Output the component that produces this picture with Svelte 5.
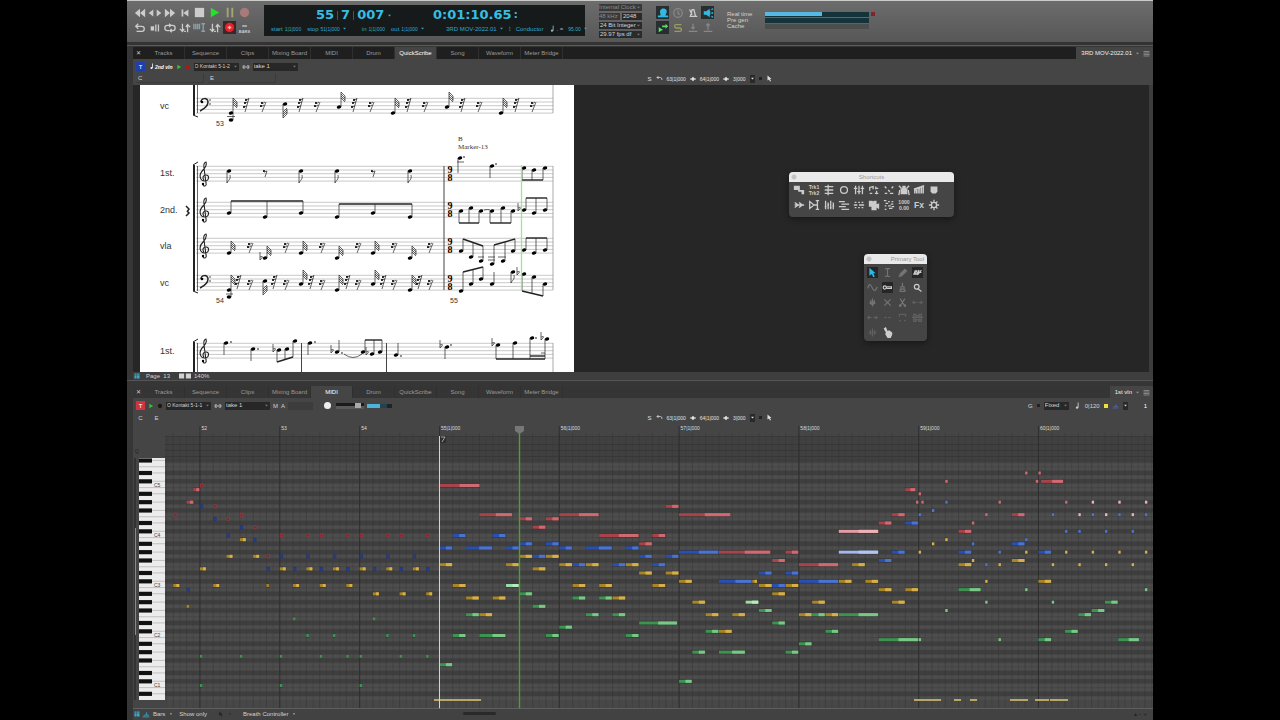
<script lang="ts">
	type Tone = 'red' | 'blue' | 'gold' | 'green' | 'pink' | 'sky' | 'mint';
	type Glyph = { s?: string; f?: string; t?: string[] };
	type Stem = [number, number, number];

	const tabs = ['Tracks', 'Sequence', 'Clips', 'Mixing Board', 'MIDI', 'Drum', 'QuickScribe', 'Song', 'Waveform', 'Meter Bridge'];

	// s = stroked path, f = filled path, t = lines of text, all on a 14 x 14 box
	const glyphs: Record<string, Glyph> = {
		rewind: { f: 'M7 2V12L1 7ZM13 2V12L7 7Z' },
		back: { f: 'M11 1V13L3 7Z' },
		forward: { f: 'M3 1V13L11 7Z' },
		fast: { f: 'M1 2V12L7 7ZM7 2V12L13 7Z' },
		start: { f: 'M3 3H5V11H3ZM11 3V11L5 7Z' },
		stop: { f: 'M2 2H12V12H2Z' },
		play: { f: 'M3 2V12L12 7Z' },
		pause: { f: 'M4 2H6V12H4ZM9 2H11V12H9Z' },
		record: { f: 'M7 2A5 5 0 1 1 7 12A5 5 0 1 1 7 2Z' },
		loopback: { s: 'M5 2L2 5L5 8M2 5H9A2.4 2.4 0 0 1 9 11H3' },
		stopbars: { s: 'M8 3V11M11 3V11', f: 'M2 5H6V10H2Z' },
		cycle: { s: 'M6 10H4A3 3 0 0 1 4 4H8M6 2L8 4L6 6M8 4H10A3 3 0 0 1 10 10H7M9 8L7 10L9 12' },
		punch: { s: 'M4 2V11M1 8L4 11L6 8M10 12V3M8 6L10 3L13 6M6 11H8' },
		count: { s: 'M1 3V9M3 3V9M5 3V9M7 3V9M9 3H13M11 3V11M9 11H13' },
		overdub: { s: 'M7 5V9M5 7H9', f: 'M7 2A5 5 0 1 1 7 12A5 5 0 1 1 7 2Z' },
		head: { f: 'M4 10V8C2 2 7 1 9 2C13 3 11 8 10 9V10H13V12H1V10Z' },
		clock: { s: 'M7 2A5 5 0 1 1 7 12A5 5 0 1 1 7 2M7 4V7L9 9' },
		metro: { s: 'M4 11L6 3H8L10 11ZM6 9L3 3M3 11H12' },
		speaker: { s: 'M9 5V9M11 3L13 2M11 7H13M11 11L13 12', f: 'M2 5H5L9 2V12L5 9H2Z' },
		sendplay: { f: 'M2 6V12L7 9ZM6 4H10V2L13 5L10 8V6H6Z' },
		solo: { s: 'M11 3H5Q3 3 3 5T5 7H9Q11 7 11 9T9 11H3' },
		down: { s: 'M7 2V8M5 6L7 8L9 6M2 11H12' },
		up: { s: 'M7 9V2M5 4L7 2L9 4M2 11H12' },
		clips: { f: 'M1 2H8V7H1ZM6 7H13V12H10V9H6Z' },
		trk: { t: ['Trk1', 'Trk2'] },
		list: { s: 'M2 3H12M2 7H12M2 11H12M6 1V13' },
		ring: { s: 'M7 3A4 4 0 1 1 7 11A4 4 0 1 1 7 3' },
		faders: { s: 'M3 2V12M7 2V12M11 2V12M1 5H5M5 9H9M9 5H13' },
		score: { s: 'M2 8V4L6 3V6M9 5H12M9 3V6M2 11H5M8 11H12M10 8V12' },
		dots: { s: 'M2 3L4 5M6 7L8 9M12 3L10 5M2 11H5M8 11H12' },
		drum: { s: 'M1 2L4 5M13 2L10 5M2 7L1 13M12 7L13 13', f: 'M5 2H9V5H11V12H3V5H5Z' },
		stairs: { s: 'M2 11V7H4V11M6 11V5H8V11M10 11V3H12V11M1 6L13 2' },
		badge: { f: 'M3 3H11V9L9 11H5L3 9Z' },
		skip: { s: 'M2 4L6 7L2 10M7 4L11 7L7 10M2 7H13' },
		mirror: { s: 'M2 3V11L7 7ZM9 2H13M9 12H13M11 2V12M6 7H11' },
		sliders: { s: 'M3 2V12M6 4V12M9 2V12M12 4V12M2 9H4M5 7H7M8 10H10M11 8H13' },
		bars: { s: 'M1 3H8M4 6H13M1 9H9M4 12H13' },
		matrix: { s: 'M2 4H4M6 4H8M10 4H12M1 7H5M7 7H13M2 10H4M6 10H8M10 10H12' },
		camera: { f: 'M1 2H5L6 3L7 2H10V6L13 5V12L10 10V13H4V9H1Z' },
		grid: { s: 'M1 2H4M6 3H8M10 3H12M3 5H6M9 6H12M2 8H4M6 8H9M10 9H13M7 11H11M2 12H4' },
		numbers: { t: ['1000', '0.00'] },
		fx: { t: ['Fx'] },
		gear: { s: 'M7 1V4M7 10V13M1 7H4M10 7H13M3 3L5 5M9 9L11 11M11 3L9 5M5 9L3 11M7 4A3 3 0 1 1 7 10A3 3 0 1 1 7 4' },
		arrow: { f: 'M3 1V11L6 9L8 13L10 12L8 8H11Z' },
		ibeam: { s: 'M4 2H6L7 3L8 2H10M7 3V11M4 12H6L7 11L8 12H10' },
		pencil: { s: 'M3 12L4 9L10 3L12 5L6 11ZM5 10L11 4' },
		wave: { s: 'M2 10L4 5H6L4 9H6L9 4L7 10L12 4M8 7H12' },
		sine: { s: 'M1 8C3 0 5 4 7 8S11 12 13 6' },
		key: { s: 'M3.500 5A2 2 0 1 1 3.500 9A2 2 0 1 1 3.500 5M6 6H12V8H6' },
		brush: { s: 'M7 1V6M5 6H9V9H5ZM4 9V12H10V9' },
		lens: { s: 'M6 3A3 3 0 1 1 6 9A3 3 0 1 1 6 3M8 9L12 12' },
		drop: { s: 'M7 2V12M5 4L4 8L7 10L10 8L9 4', f: 'M5 6H9V9H5Z' },
		cross: { s: 'M3 3L11 11M11 3L3 11' },
		scissors: { s: 'M4 2L9 10M10 2L5 10M4 10A1 1 0 1 1 4 12A1 1 0 1 1 4 10M10 10A1 1 0 1 1 10 12A1 1 0 1 1 10 10' },
		stretch: { s: 'M1 7H6M3 5L1 7L3 9M8 7H13M11 5L13 7L11 9' },
		dash: { s: 'M3 7H6M8 7H11M4 6V8M10 6V8' },
		frame: { s: 'M3 3H11M3 3V6M11 3V6M3 11H5M9 11H11' },
		mesh: { s: 'M2 3H5V6H2ZM9 3H12V6H9ZM5 5H9M2 9H5V12H2ZM9 9H12V12H9ZM5 10H9M0 7H14' },
		split: { s: 'M7 2V12M2 7H5M9 7H12M4 4L5 7L4 10M10 4L9 7L10 10' },
		hand: { f: 'M2 2L5 0L7 5L9 4L13 7V10L11 14H7L4 9L5 7Z' },
		link: { s: 'M5 5H2V9H5M9 5H12V9H9M4 7H10' },
		undo: { s: 'M5 2L2 5L5 8M2 5H9Q12 5 12 10' },
		diamond: { f: 'M7 2L12 7L7 12L2 7ZM0 6H14V8H0Z' },
		note: { s: 'M9 1V10', f: 'M7 8A2 2 0 1 1 7 12A2 2 0 1 1 7 8Z' },
		caret: { f: 'M3 5H11L7 10Z' },
		menu: { s: 'M1 3H13M1 6H13M1 9H13M1 12H13' },
		panes: { f: 'M1 1H6V4H1ZM7 1H13V4H7ZM1 5H6V13H1ZM7 5H13V13H7Z' },
		pages: { f: 'M0 4H6V10H0ZM8 4H14V10H8Z' },
		track: { s: 'M1 12H13M3 9H8V4M8 9H12' }
	};

	const transport = [
		['rewind', 'Rewind', ''],
		['back forward', 'Step', ''],
		['fast', 'Fast forward', ''],
		['start', 'Return to start', ''],
		['stop', 'Stop', 'bright'],
		['play', 'Play', 'go'],
		['pause', 'Pause', 'hold'],
		['record', 'Record', 'rec'],
		['loopback', 'Auto rewind', ''],
		['stopbars', 'Auto stop', ''],
		['cycle', 'Cycle', ''],
		['punch', 'Punch in', ''],
		['count', 'Count off', 'cool'],
		['punch', 'Punch out', ''],
		['overdub', 'Overdub', 'armed']
	];

	const modes = [
		['head', 'Audible mode', 'on'],
		['clock', 'Sync', 'dim'],
		['metro', 'Click', ''],
		['speaker', 'Monitor', 'on'],
		['sendplay', 'Chase', 'on lime'],
		['solo', 'Solo', 'olive'],
		['down', 'Import', 'dim'],
		['up', 'Export', 'dim']
	];

	const shortcuts = [
		'clips', 'trk', 'list', 'ring', 'faders', 'score', 'dots', 'drum', 'stairs', 'badge',
		'skip', 'mirror', 'sliders', 'bars', 'matrix', 'camera', 'grid', 'numbers', 'fx', 'gear'
	];

	const tools = [
		['arrow', 'cyan'], ['ibeam', 'dim'], ['pencil', 'dim'], ['wave', 'boxed'],
		['sine', 'dim'], ['key', 'boxed'], ['brush', 'dim'], ['lens', 'lit'],
		['drop', 'dim'], ['cross', 'dim'], ['scissors', 'dim'], ['stretch', 'faint'],
		['stretch', 'faint'], ['dash', 'faint'], ['frame', 'faint'], ['mesh', 'faint'],
		['split', 'faint'], ['hand', 'lit']
	];

	// ---- score ----
	const staves = [98, 166, 202, 238, 275, 343];
	const staffNames: [string, number][] = [['vc', 109], ['1st.', 176], ['2nd.', 213], ['vla', 249], ['vc', 286], ['1st.', 354]];

	// [x, y, end of stem] single notes with a stack of short flags
	const flagged: Stem[] = [
		[231, 113, 98], [285, 104, 118], [339, 107, 92], [393, 113, 98], [447, 107, 92], [501, 113, 98],
		[229, 253, 241], [265, 258, 246], [301, 253, 241], [337, 258, 246], [373, 253, 241], [410, 258, 246],
		[229, 290, 275], [265, 281, 295], [301, 284, 270], [337, 290, 275], [373, 284, 270], [410, 290, 275]
	];
	const eighths: Stem[] = [[229, 171, 183], [301, 171, 183], [337, 171, 183], [410, 171, 183], [513, 272, 283]];
	const plain: Stem[] = [
		[460, 158, 173], [492, 166, 178], [492, 284, 272],
		[226, 343, 355], [253, 349, 361], [310, 343, 355], [337, 352, 340], [396, 355, 343], [447, 347, 359]
	];
	// beamed groups: the beam runs from the first stem end to the last
	const groups: Stem[][] = [
		[[229, 213, 201], [265, 217, 201], [301, 213, 201]],
		[[337, 217, 204], [373, 213, 204], [410, 217, 204]],
		[[524, 168, 180], [534, 170, 180], [545, 168, 180]],
		[[461, 211, 223], [471, 208, 223], [481, 211, 223]],
		[[492, 211, 223], [503, 208, 223], [513, 211, 223]],
		[[524, 210, 198], [534, 213, 198], [545, 210, 198]],
		[[461, 251, 239], [471, 257, 242], [481, 261, 246]],
		[[492, 264, 245], [503, 261, 242], [513, 251, 239]],
		[[524, 250, 238], [534, 253, 238], [545, 250, 238]],
		[[461, 291, 272], [471, 284, 270], [481, 279, 267]],
		[[524, 274, 291], [534, 277, 293], [545, 284, 296]],
		[[279, 350, 362], [287, 349, 360], [295, 341, 357]],
		[[363, 352, 340], [372, 354, 340], [380, 352, 340]],
		[[498, 345, 359], [515, 343, 359], [532, 338, 359], [547, 339, 359]]
	];
	const dots = [[464, 157], [496, 164], [231, 342], [258, 349], [315, 342], [342, 353], [401, 356], [451, 345], [536, 338]];
	const flats = [[261, 258], [519, 209], [518, 273], [274, 350], [332, 351], [367, 353], [441, 346], [493, 344], [542, 338]];
	const shortRests = [
		...[263, 317, 371, 425, 479, 533].map((x) => [x, 106]),
		...[250, 286, 322, 358, 394, 430].map((x) => [x, 247]),
		...[250, 286, 322, 358, 394, 430].map((x) => [x, 284])
	];
	const longRests = [
		...[246, 300, 354, 408, 462, 516].map((x) => [x, 105]),
		...[238, 274, 311, 347, 383, 419].map((x) => [x, 282])
	];

	function stemX([x, y, end]: Stem) {
		return end < y ? x + 2 : x - 2;
	}

	function flagPath(n: Stem) {
		const dir = n[2] < n[1] ? 1 : -1;
		const x = stemX(n);
		return [0, 1, 2, 3].map((i) => `M${x} ${n[2] + i * 2 * dir}l4 ${4 * dir}`).join('') + `M${x + 4} ${n[2] + 4 * dir}v${5 * dir}`;
	}

	// ---- piano roll ----
	const EIGHTH = 13.31;
	const ORIGIN = 439.5;
	const ROW = 50 / 12;
	const C3 = 585.5;

	const ink: Record<Tone, [string, string]> = {
		red: ['#a9434b', '#cf6a72'],
		blue: ['#284fb4', '#4a74d0'],
		gold: ['#a98526', '#d5b04c'],
		green: ['#3b9450', '#7bc788'],
		pink: ['#e59ca3', '#efb1b5'],
		sky: ['#a3b8f0', '#b4c5f4'],
		mint: ['#9bdba8', '#b6ecc0']
	};

	// [eighths from bar 55, semitones from C3, length in eighths]
	const lanes: [Tone, number[][]][] = [
		['red', [
			[-20, 17, 0.2], [-19, 20, 0.55], [-18.5, 23, 0.5], [-18, 24, 0.2], [-17, 19, 0.2], [-16, 16, 0.2], [-15, 17, 0.2], [-14, 14, 0.2], [-13, 7, 0.2],
			...[-12, -10, -9, -7, -6, -4, -3, -1].map((k) => [k, 12, 0.2]),
			[0, 24, 3.05], [3, 17, 2.5], [6, 16, 1], [7, 14, 1], [8, 16, 1], [9, 17, 3], [12, 12, 3], [15, 10, 1], [16, 12, 1], [17, 19, 1], [18, 17, 3.9],
			[21, 8, 3.9], [25, 6, 1], [26, 8, 1], [27, 5, 3], [33, 15, 1], [34, 17, 1], [35, 23, 0.8], [35.8, 20, 0.1], [36, 22, 0.2], [36.2, 20, 0.1],
			[38, 25, 0.2], [39, 13, 1], [40, 15, 0.1], [41, 17, 0.1], [42, 20, 0.2], [43, 17, 1], [44, 27, 0.2], [44.8, 25, 0.1], [45, 27, 0.1], [45.2, 25, 1.7], [47, 20, 0.2]
		]],
		['pink', [[30, 13, 3], [48, 17, 0.2], [49, 20, 0.2], [50, 17, 0.2], [51, 20, 0.2], [52, 17, 0.2], [53, 20, 0.2]]],
		['blue', [
			[-19, -1, 0.2], [-18, 19, 0.2], [-17, 16, 0.2], [-16, 12, 0.2], [-15, 14, 0.2], [-14, 11, 0.2],
			...[-13, -11, -9, -7, -5, -3, -1].map((k) => [k, 4, 0.2]),
			...[-12, -10, -8, -6, -4, -2].map((k) => [k, 7, 0.2]),
			[0, 9, 1], [1, 12, 1], [2, 9, 2], [4, 12, 1], [5, 9, 1], [6, 10, 1], [7, 7, 1], [8, 10, 1], [9, 9, 1], [10, 5, 1], [11, 9, 2], [13, 5, 1],
			[14, 9, 1], [15, 7, 1], [16, 5, 1], [17, 7, 1], [18, 8, 3], [21, 1, 2.5], [24, 3, 1], [25, 0, 1], [26, 3, 1], [27, 1, 3], [33, 6, 1], [34, 8, 1],
			[35, 15, 1], [36, 17, 0.2], [37, 18, 0.1], [38, 20, 0.1], [39, 8, 1], [40, 10, 0.2], [41, 5, 0.2], [42, 8, 0.1], [43, 10, 1], [44, 11, 0.2],
			[45, 8, 1], [46, 17, 0.1], [47, 13, 0.2], [48, 13, 0.2], [49, 17, 0.2], [50, 13, 0.2], [51, 17, 0.2], [52, 13, 0.2], [53, 17, 0.2]
		]],
		['sky', [[30, 8, 3]]],
		['gold', [
			[-20, 0, 0.5], [-19, -5, 0.2], [-18, 4, 0.5], [-17, 0, 0.5], [-16, 7, 0.5], [-15, 11, 0.5], [-14, 7, 0.5], [-13, 0, 0.2],
			...[-12, -10, -8, -6, -4, -2].map((k) => [k, 4, 0.5]),
			...[-11, -9, -7].map((k) => [k, 0, 0.5]),
			...[-5, -3, -1].map((k) => [k, -2, 0.5]),
			[0, 5, 1], [1, 0, 1], [2, -3, 1], [3, -7, 1], [4, -3, 1], [5, 5, 1], [6, 7, 1], [7, 4, 1], [8, 7, 1], [9, 5, 1], [10, 0, 1], [11, 5, 1], [12, 0, 1],
			[13, -3, 1], [14, 5, 1], [15, 3, 1], [16, 0, 1], [17, 3, 1], [18, 1, 1], [19, -4, 1], [20, -7, 1], [21, -11, 1], [22, -7, 1], [23.5, 1, 0.4],
			[24, 0, 1], [25, -2, 1], [26, 0, 1], [27, -7, 1], [28, -4, 1], [29, -7, 1], [30, 1, 1], [31, 5, 1], [32, 1, 1], [33, -1, 1], [34, -4, 1], [35, -1, 1],
			[36, 8, 0.2], [37, 10, 0.1], [38, 11, 0.2], [39, 5, 1], [40, 6, 0.1], [41, 1, 0.2], [42, 5, 0.2], [43, 6, 1], [44, 8, 0.2], [45, 1, 1],
			[46, 5, 0.1], [48, 5, 0.1], [50, 5, 0.1], [52, 5, 0.1], [47, 8, 0.2], [49, 8, 0.2], [51, 8, 0.2], [53, 8, 0.2]
		]],
		['green', [
			[-11, -8, 0.2], [-5, -8, 0.1], ...[-10, -8, -4, -2].map((k) => [k, -12, 0.1]),
			...[-18, -15, -12, -9, -7, -6, -3, -1].map((k) => [k, -17, 0.1]),
			...[-18, -12, -6].map((k) => [k, -24, 0.2]),
			[0, -19, 1], [1, -12, 1], [2, -7, 1], [3, -12, 2], [6, -2, 1], [7, -5, 1], [8, -12, 1], [9, -10, 1], [10, -3, 1], [11, -7, 1], [12, -3, 1],
			[13, -7, 1], [14, -12, 1], [15, -9, 2.9], [18, -23, 1], [19, -16, 1], [20, -11, 1], [21, -16, 2], [24, -6, 1], [25, -9, 1], [26, -16, 1],
			[27, -14, 1], [28, -7, 1], [29, -11, 1], [30, -7, 3], [33, -13, 3], [36, -13, 0.2], [38, -6, 0.2], [39, -1, 1.7], [41, -4, 0.2], [42, -13, 0.2],
			[44, -1, 0.1], [45, -13, 1], [46, -4, 0.1], [47, -11, 1], [48, -7, 1], [49, -6, 1], [50, -4, 1], [51, -13, 1.6], [53, -1, 0.2]
		]],
		['mint', [[5, 0, 1], [23, -4, 1]]]
	];

	const notes = lanes.flatMap(([tone, list]) =>
		list.map(([at, pitch, len]) => ({
			tone,
			x: ORIGIN + at * EIGHTH,
			y: C3 - pitch * ROW,
			w: Math.max(len * EIGHTH - 0.5, 2.4),
			small: len < 0.3,
			past: at < 0
		}))
	);

	const rows = Array.from({ length: 58 }, (_, i) => {
		const pitch = 30 - i;
		const step = ((pitch % 12) + 12) % 12;
		return { pitch, step, y: C3 - pitch * ROW - ROW / 2, black: [1, 3, 6, 8, 10].includes(step) };
	});

	const ticks = Array.from({ length: 149 }, (_, i) => ORIGIN + ((i - 41) * EIGHTH) / 2);
	const barLines: [string, number][] = [
		['52', -18], ['53', -12], ['54', -6], ['55|1|000', 0], ['56|1|000', 9],
		['57|1|000', 18], ['58|1|000', 27], ['59|1|000', 36], ['60|1|000', 45]
	];
	const controllers = [[434, 47], [914, 27], [954, 7], [970, 7], [1010, 18], [1035, 14], [1050, 18]];

	let upperTab = $state('QuickScribe');
	let lowerTab = $state('MIDI');
</script>

{#snippet icon(name: string, size = 12)}
	{@const g = glyphs[name]}
	<svg class="icon" width={size} height={size} viewBox="0 0 14 14" aria-hidden="true">
		{#if g.f}<path d={g.f} fill="currentColor" />{/if}
		{#if g.s}<path class="line-art" d={g.s} fill="none" stroke="currentColor" stroke-width="1.5" />{/if}
		{#each g.t ?? [] as line, i}
			<text x="7" y={g.t?.length === 1 ? 10 : 6 + i * 7} text-anchor="middle" font-size={g.t?.length === 1 ? 10 : 6} font-weight="700" fill="currentColor">{line}</text>
		{/each}
	</svg>
{/snippet}

{#snippet picker(value: string, label: string, kind = '')}
	<span class="picker {kind}">
		<select aria-label={label}><option>{value}</option></select>
		{@render icon('caret', 5)}
	</span>
{/snippet}

{#snippet tabBar(active: string, pick: (t: string) => void, title: string)}
	<nav class="tabs">
		<button class="close" aria-label="Close">✕</button>
		{#each tabs as tab}
			<button class="tab" class:active={tab === active} onclick={() => pick(tab)}>{tab}</button>
		{/each}
		<button class="title">{title} {@render icon('caret', 5)}{@render icon('menu', 7)}</button>
	</nav>
{/snippet}

{#snippet selection()}
	<div class="selection">
		<button>S</button>
		<button aria-label="Undo selection">{@render icon('undo', 7)}</button>
		<span>63|1|000</span>{@render icon('diamond', 6)}
		<span>64|1|000</span>{@render icon('diamond', 6)}
		<span>3|000</span>
		<button class="dark" aria-label="Selection menu">{@render icon('caret', 5)}</button>
		<i class="dot"></i>
		<button aria-label="Select by cursor">{@render icon('arrow', 7)}</button>
	</div>
{/snippet}

{#snippet treble(y: number)}
	<path
		class="clef"
		d="M203 {y + 19}c1 2 4 1 3-2l-2-15c-1-4 1-6 2-6c1 3 0 5-3 8c-5 5-3 11 2 11c4 0 5-6 1-6c-3 0-4 3-2 5"
	/>
	<circle cx="203" cy={y + 18} r="1.2" />
{/snippet}

{#snippet bass(y: number)}
	<path class="clef heavy" d="M201 {y + 4}c0-4 7-5 7 0c0 4-4 7-8 9" />
	<circle cx="202" cy={y + 4} r="1.3" />
	<circle cx="210" cy={y + 2} r="0.7" />
	<circle cx="210" cy={y + 6} r="0.7" />
{/snippet}

{#snippet head([x, y, end]: Stem)}
	<ellipse cx={x} cy={y} rx="2.3" ry="1.7" transform="rotate(-20 {x} {y})" />
	<path class="stem" d="M{stemX([x, y, end])} {y}V{end}" />
{/snippet}

<main class="app">
	<header class="transport">
		<div class="buttons">
			{#each transport as [names, label, kind]}
				<button class="key {kind}" aria-label={label}>
					{#each names.split(' ') as name}
						{@render icon(name, kind ? 13 : names.includes(' ') ? 8 : 12)}
					{/each}
				</button>
			{/each}
			<button class="key bars"><span>∞</span><small>BARS</small></button>
		</div>

		<section class="lcd">
			<div class="counter">
				<span>55</span><i></i><span>7</span><i></i><span>007</span>{@render icon('caret', 5)}
			</div>
			<div class="clock"><span>0:01:10.65</span><b>:</b></div>
			<div class="marks">
				<span>start <em>1|1|000</em></span>
				<span>stop <em>51|1|000</em> {@render icon('caret', 5)}</span>
				<span class="in">in <em>1|1|000</em></span>
				<span>out <em>1|1|000</em> {@render icon('caret', 5)}</span>
			</div>
			<div class="marks tempo">
				<span>3RD MOV-2022.01 {@render icon('caret', 5)}</span>
				<b>⁝</b>
				<span>Conductor</span>
				<span class="beat">{@render icon('note', 8)}. =</span>
				<span><em>95.00</em>{@render icon('caret', 5)}</span>
			</div>
		</section>

		<div class="audio">
			{@render picker('Internal Clock', 'Sync source', 'muted')}
			<div class="pair">
				{@render picker('48 kHz', 'Sample rate', 'muted bare')}
				{@render picker('2048', 'Buffer size', 'bare')}
			</div>
			{@render picker('24 Bit Integer', 'Sample format')}
			{@render picker('29.97 fps df', 'Frame rate')}
		</div>

		<div class="modes">
			{#each modes as [name, label, kind]}
				<button class="mode {kind}" aria-label={label}>{@render icon(name, 12)}</button>
			{/each}
		</div>

		<dl class="load">
			<dt>Real time</dt><dd><i class="fill"></i></dd>
			<dt>Pre gen</dt><dd></dd>
			<dt>Cache</dt><dd class="off"></dd>
		</dl>
		<i class="clip"></i>
	</header>

	<section class="panel">
		{@render tabBar(upperTab, (t) => (upperTab = t), '3RD MOV-2022.01')}
		<div class="toolbar">
			<div class="line">
				<button class="type">T</button>
				<span class="name">{@render icon('note', 7)}2nd vln</span>
				<button class="go" aria-label="Play enable">{@render icon('play', 6)}</button>
				<button class="arm" aria-label="Record enable">{@render icon('record', 6)}</button>
				{@render picker('O Kontakt 5-1-2', 'Output', 'wide small')}
				{@render icon('link', 8)}
				{@render picker('take 1', 'Take', 'wide')}
			</div>
			<div class="line split">
				<div class="fields">
					<label class="field"><span>C</span><input aria-label="Column" /></label>
					<label class="field"><span>E</span><input aria-label="Event" /></label>
				</div>
				{@render selection()}
			</div>
		</div>

		<div class="workspace">
			<svg class="score" viewBox="140 85 434 287" role="img" aria-label="Score page">
				{#each staves as y}
					{#each [0, 1, 2, 3, 4] as i}
						<path class="staff" d="M196 {y + i * 3.7 + 0.3}H553" />
					{/each}
				{/each}
				<path class="bracket" d="M194 85V115M194 165V291M194 342V372" />
				<path class="hook" d="M193 115l5 2M193 165l5-3M193 291l5 2M193 342l5-3" />
				<path class="edge" d="M197.500 85V113M197.500 166V291M197.500 343V372" />
				<path class="bar" d="M444 166V290M301.500 343V372M386.500 343V372" />
				<path class="bar soft" d="M553 85V113M553 166V290M553 343V372" />
				<path class="clef heavy" d="M186 206l3 3l-2 3M187 211l2 2l-3 3" />

				{#each staffNames as [name, y]}
					<text class="part" x="160" {y}>{name}</text>
				{/each}
				<text class="measure" x="216" y="126">53</text>
				<text class="measure" x="216" y="303">54</text>
				<text class="measure" x="450" y="303">55</text>
				<text class="marker" x="458" y="141">B</text>
				<text class="marker" x="458" y="149">Marker-13</text>
				{#each [166, 202, 238, 275] as y}
					<text class="meter" x="450" y={y + 7}>9</text>
					<text class="meter" x="450" y={y + 15}>8</text>
				{/each}

				{@render bass(98)}
				{@render treble(166)}
				{@render treble(202)}
				{@render treble(238)}
				{@render bass(275)}
				{@render treble(343)}

				{#each flagged as n}
					{@render head(n)}
					<path class="flag" d={flagPath(n)} />
				{/each}
				<ellipse cx="231" cy="120" rx="2.3" ry="1.7" />
				<ellipse cx="229" cy="297" rx="2.3" ry="1.7" />
				<path class="stem" d="M233 113V120M231 297V290M227 116.500H235M226 294H233M457 162H464M478 257H484M488 257H495M488 260H495M498 257H506" />
				{#each eighths as n}
					{@render head(n)}
					<path class="flag" d="M{n[0] - 2} {n[2]}c1-3 4-3 3-8" />
				{/each}
				{#each plain as n}{@render head(n)}{/each}
				{#each groups as group}
					{@const last = group[group.length - 1]}
					{#each group as n}{@render head(n)}{/each}
					<path class="beam" d="M{stemX(group[0])} {group[0][2]}L{stemX(last)} {last[2]}" />
				{/each}
				<path class="beam" d="M530 356H545" />
				<path class="flag" d="M541 353H545M344 354Q353 361 362 354M484 210Q488 209 490 210" />
				{#each dots as [x, y]}<circle cx={x} cy={y} r="0.8" />{/each}
				{#each flats as [x, y]}
					<path class="flag" d="M{x - 1} {y - 6}V{y + 2}Q{x + 4} {y - 3} {x - 1} {y - 1}" />
				{/each}
				{#each [265, 373] as x}
					<path class="flag" d="M{x - 2} 171q1 2 4 0l-2 6" />
					<circle cx={x - 1} cy="171" r="1" />
				{/each}
				{#each shortRests as [x, y]}
					<path class="flag" d="M{x + 3} {y - 4}L{x - 1} {y + 6}M{x - 2} {y - 3}q2 1 4-1M{x - 3} {y}q2 1 4-1" />
					<circle cx={x - 1} cy={y - 3} r="1" /><circle cx={x - 2} cy={y} r="1" />
				{/each}
				{#each longRests as [x, y]}
					<path class="flag" d="M{x + 3} {y - 7}L{x - 1} {y + 7}M{x - 1} {y - 5}l4-1M{x - 2} {y - 2}l4-1M{x - 3} {y + 2}l4-1" />
					<circle cx={x} cy={y - 5} r="1" /><circle cx={x - 1} cy={y - 2} r="1" /><circle cx={x - 2} cy={y + 2} r="1" />
				{/each}
				<path class="cursor" d="M521.500 165V291" />
			</svg>

			<div class="palette shortcuts">
				<h2>Shortcuts</h2>
				<div class="cells">
					{#each shortcuts as name}
						<button aria-label={name}>{@render icon(name, 12)}</button>
					{/each}
				</div>
			</div>
			<div class="palette primary">
				<h2>Primary Tool</h2>
				<div class="cells">
					{#each tools as [name, kind]}
						<button class={kind} aria-label={name}>{@render icon(name, 11)}</button>
					{/each}
				</div>
			</div>
		</div>
		<footer class="status">
			<span class="cool">{@render icon('panes', 6)}</span>
			<span class="page">Page&nbsp; 13</span>
			{@render icon('pages', 12)}
			<span>140%</span>
		</footer>
	</section>

	<section class="panel lower">
		{@render tabBar(lowerTab, (t) => (lowerTab = t), '1st vln')}
		<div class="toolbar">
			<div class="line">
				<button class="type hot">T</button>
				<button class="go" aria-label="Play enable">{@render icon('play', 6)}</button>
				<button class="arm off" aria-label="Record enable">{@render icon('record', 6)}</button>
				{@render picker('O Kontakt 5-1-1', 'Output', 'wide small')}
				{@render icon('link', 8)}
				{@render picker('take 1', 'Take', 'wide')}
				<button class="mute">M</button>
				<button class="auto-on">A</button>
				<input class="auto" aria-label="Automation" />
				<i class="knob"></i>
				<input class="volume" type="range" value="85" aria-label="Volume" />
				<i class="level"></i>
				<div class="snap">
					<span>G</span>
					<i class="dot"></i>
					{@render picker('Fixed', 'Grid mode', 'grid')}
					{@render icon('note', 8)}
					<span>0|120</span>
					<i class="chip"></i>
					<span class="violet">{@render icon('track', 7)}</span>
					<button class="dark" aria-label="Grid menu">{@render icon('caret', 5)}</button>
					<span class="count">1</span>
				</div>
			</div>
			<div class="line split">
				<div class="fields tight"><button>C</button><button>E</button></div>
				{@render selection()}
			</div>
		</div>

		<svg class="roll" viewBox="133 423 1020 286" preserveAspectRatio="xMinYMin slice" role="img" aria-label="Piano roll">
			<rect x="165" y="437" width="988" height="22" fill="#404040" />
			{#each rows as row}
				<rect x="165" y={row.y} width="988" height={ROW} fill={row.black ? '#3e3e3e' : '#4d4d4d'} />
				<path d="M165 {row.y}H1153" stroke="#424242" stroke-width="0.5" />
			{/each}
			<rect x="165" y="700" width="988" height="9" fill="#474747" />
			<path d="M165 436.500H1153M165 444.500H1153M165 450.500H1153M165 456.500H1153" stroke="#333" stroke-width="0.7" />
			{#each ticks as x, i}
				<path d="M{x} {i % 2 ? 433 : 435}V709" stroke="#373737" stroke-width={i % 2 ? 0.5 : 0.3} />
			{/each}
			{#each barLines as [label, at]}
				<path d="M{ORIGIN + at * EIGHTH} 426V709" stroke="#2c2c2c" stroke-width="0.8" />
				<text x={ORIGIN + 1.5 + at * EIGHTH} y="430" font-size="5" fill="#dcdcdc">{label}</text>
			{/each}

			<rect x="139" y="458" width="26" height="242" fill="#ececec" />
			{#each rows as row}
				{#if row.black}
					<rect x="139" y={row.y} width="13" height={ROW} fill="#111" />
					<path d="M152 {row.y + 2}H165" stroke="#a5a5a5" stroke-width="0.6" />
				{:else if row.step === 4 || row.step === 11}
					<path d="M139 {row.y}H165" stroke="#a5a5a5" stroke-width="0.6" />
				{:else if row.step === 0}
					<text x="154" y={row.y + 4} font-size="5" fill="#444">C{3 + row.pitch / 12}</text>
				{/if}
			{/each}
			<rect x="134" y="458" width="2" height="242" fill="#333" />
			<rect x="135" y="528" width="1" height="107" fill="#8a8a8a" />
			<text x="135" y="453" font-size="5" fill="#222">Q</text>

			{#each notes as n}
				{#if n.past && n.small && (n.tone === 'red' || n.tone === 'blue')}
					<rect x={n.x + 0.5} y={n.y - 1.500} width="2.4" height="3" fill={n.tone === 'red' ? '#56363a' : '#28418f'} stroke={n.tone === 'red' ? '#a3323e' : '#1f357f'} stroke-width="0.8" />
				{:else}
					<rect x={n.x} y={n.y - 2} width={n.w} height="4" fill="#2a2a2a" opacity="0.5" />
					<rect x={n.x} y={n.y - 1.500} width={n.w} height="3" fill={ink[n.tone][n.small && !n.past ? 1 : 0]} />
					{#if !n.small}
						<rect x={n.x + n.w * 0.5} y={n.y - 1.500} width={n.w * 0.5 - 0.3} height="3" fill={ink[n.tone][1]} />
					{/if}
				{/if}
			{/each}
			{#each controllers as [x, w]}
				<rect {x} y="699" width={w} height="2" fill="#b9a768" />
			{/each}

			<path d="M439.500 436V709" stroke="#e3dc82" />
			<rect x="440" y="436" width="6" height="7" fill="#2f2f2f" />
			<path d="M441 437h4l-3 5" fill="none" stroke="#bbb" stroke-width="0.8" />
			<path d="M519.500 432V709" stroke="#4da22f" stroke-width="1.4" />
			<path d="M515 426H524V431L519.500 434L515 431Z" fill="#777" />
			<path d="M133 708.500H1153" stroke="#666" stroke-width="0.8" />
		</svg>

		<footer class="status tall">
			<span class="cool">{@render icon('panes', 6)}{@render icon('track', 8)}</span>
			<span>Bars {@render icon('caret', 4)}</span>
			<span class="show">Show only</span>
			<span class="pointer">{@render icon('arrow', 6)}{@render icon('caret', 4)}</span>
			<span>Breath Controller {@render icon('caret', 4)}</span>
			<i class="thumb"></i>
			<span class="zoom">▴ − +</span>
		</footer>
	</section>
</main>

<style>
	:global(body) {
		background: #000;
	}

	.app {
		box-sizing: border-box;
		min-height: 100vh;
		padding: 0 127px;
		font-family: 'Liberation Sans', Arial, sans-serif;
		font-size: 6px;
		line-height: 8px;
		color: #d2d2d2;
	}

	.app button,
	.app input,
	.app select {
		box-sizing: border-box;
		margin: 0;
		padding: 0;
		border: 0;
		background: none;
		color: inherit;
		font: inherit;
	}

	.icon {
		display: block;
		flex: none;
	}

	.transport {
		box-sizing: border-box;
		display: flex;
		align-items: flex-start;
		height: 42px;
		padding: 4px 0 0 5px;
		border-top: 1px solid #c9ccc9;
		background: linear-gradient(#6c6c6c, #575757);
	}

	.buttons {
		display: grid;
		grid-template-columns: repeat(8, 15px);
		grid-auto-rows: 15px;
		width: 132px;
		color: #ccc;
	}

	.key {
		display: flex;
		align-items: center;
		justify-content: center;
	}

	.app .key.go {
		color: #21e32b;
	}

	.app .key.hold {
		color: #a7a774;
	}

	.app .key.rec {
		color: #a87a7a;
	}

	.app .key.cool {
		color: #8ba0aa;
	}

	.app .key.armed {
		margin: 1px;
		background: #3c2727;
		color: #e3222b;
	}

	.armed .line-art {
		stroke: #ffb0b0;
	}

	.app .key.bars {
		flex-direction: column;
		font-weight: 700;
	}

	.key.bars span {
		font-size: 7px;
		line-height: 7px;
	}

	.key.bars small {
		font-size: 4px;
		line-height: 5px;
	}

	.lcd {
		box-sizing: border-box;
		display: grid;
		grid-template-columns: 173px 1fr;
		grid-template-rows: 18px 9px;
		width: 321px;
		height: 31px;
		padding: 1px 5px 0 7px;
		background: #161a1b;
		color: #35bfe4;
	}

	.counter,
	.clock {
		display: flex;
		align-items: center;
		font: 700 13px/18px 'DejaVu Sans', sans-serif;
	}

	.counter {
		gap: 3px;
		padding-left: 45px;
	}

	.counter i {
		width: 1px;
		height: 9px;
		background: #1c6376;
	}

	.clock {
		gap: 2px;
	}

	.clock span {
		margin-left: -11px;
	}

	.clock b {
		font-size: 10px;
	}

	.marks {
		display: flex;
		align-items: center;
		gap: 6px;
		color: #2fa9cb;
		white-space: nowrap;
	}

	.marks span {
		display: flex;
		align-items: center;
		gap: 2px;
	}

	.marks em {
		font-style: normal;
		font-size: 5px;
	}

	.marks .in {
		margin-left: 9px;
	}

	.marks.tempo {
		gap: 5px;
		padding-left: 2px;
	}

	.marks .beat {
		gap: 0;
		color: #9cb8c0;
	}

	.audio {
		display: flex;
		flex-direction: column;
		gap: 2px;
		width: 43px;
		margin: -1px 14px 0;
	}

	.pair {
		display: grid;
		grid-template-columns: 21px 20px;
		gap: 2px;
	}

	.picker {
		display: flex;
		align-items: center;
		height: 7px;
		padding-right: 1px;
		background: #2a2a2a;
		color: #d6d6d6;
	}

	.picker select {
		flex: 1;
		min-width: 0;
		height: 7px;
		padding-left: 1px;
		appearance: none;
		line-height: 7px;
	}

	.picker .icon {
		color: #777;
	}

	.picker.muted {
		background: #393939;
		color: #8c8c8c;
	}

	.picker.muted select {
		padding-left: 0;
	}

	.picker.bare {
		padding-right: 0;
	}

	.picker.bare .icon {
		display: none;
	}

	.picker.wide {
		width: 44px;
		height: 8px;
		background: #272727;
	}

	.picker.small select {
		font-size: 5px;
	}

	.modes {
		display: grid;
		grid-template-columns: repeat(4, 13px);
		grid-auto-rows: 13px;
		gap: 2px;
		margin-top: 1px;
		color: #ccc;
	}

	.mode {
		display: grid;
		place-items: center;
	}

	.app .mode.on {
		background: #282d2f;
		color: #33bae2;
	}

	.app .mode.lime {
		color: #56df6d;
	}

	.app .mode.olive {
		color: #9a9c62;
	}

	.app .mode.dim {
		color: #888;
	}

	.load {
		display: grid;
		grid-template-columns: 38px 104px;
		grid-auto-rows: 6px;
		align-items: center;
		margin: 6px 0 0 13px;
		line-height: 6px;
	}

	.load dd {
		height: 5px;
		margin: 0;
		background: #14333a;
	}

	.load dd.off {
		background: #4d4d4d;
	}

	.fill {
		display: block;
		width: 55%;
		height: 4px;
		background: #56b9e3;
	}

	.clip {
		width: 4px;
		height: 4px;
		margin: 7px 0 0 2px;
		background: #84222a;
	}

	.panel {
		padding: 5px 0 0 6px;
		background: linear-gradient(#333 3px, #5a5a5a 3px 4px, #363636 4px);
	}

	.panel.lower {
		padding-top: 6px;
		background: linear-gradient(#555 1px, #363636 1px);
	}

	.tabs {
		display: flex;
		height: 12px;
		background: #1f1f1f;
	}

	.lower .tabs {
		background: #353535;
	}

	.tab {
		width: 42px;
		line-height: 12px;
		white-space: nowrap;
	}

	.app .tab,
	.app .close {
		border-right: 1px solid #303030;
		color: #9a9a9a;
	}

	.app .close {
		width: 10px;
		border: 0;
		color: #ccc;
	}

	.app .tab.active {
		background: #454545;
		color: #fff;
	}

	.app .title {
		display: flex;
		align-items: center;
		gap: 3px;
		margin-left: auto;
		padding: 0 3px 0 5px;
		background: #454545;
		color: #f0f0f0;
	}

	.title .icon {
		color: #999;
	}

	.toolbar {
		display: grid;
		grid-template-rows: 15px 9px;
		padding: 0 0 2px 3px;
		background: #454545;
	}

	.lower .toolbar {
		padding-bottom: 1px;
	}

	.line {
		display: flex;
		align-items: center;
		gap: 3px;
	}

	.line.split {
		display: grid;
		grid-template-columns: 1fr 1fr;
		gap: 0;
	}

	.app .type {
		width: 9px;
		height: 9px;
		background: #1f3fae;
		color: #fff;
	}

	.app .type.hot {
		background: #d0343f;
	}

	.name {
		display: flex;
		align-items: center;
		color: #fff;
		font-size: 5px;
		font-style: italic;
		font-weight: 700;
	}

	.app .go {
		color: #28c832;
	}

	.app .arm {
		color: #b01717;
	}

	.app .arm.off {
		color: #241414;
	}

	.fields {
		display: grid;
		grid-template-columns: 68px 68px;
		gap: 4px;
	}

	.fields.tight {
		grid-template-columns: 9px 9px;
		gap: 7px;
	}

	.field {
		display: flex;
		height: 8px;
		padding-left: 2px;
		border-right: 1px solid #3a3a3a;
		border-bottom: 1px solid #3a3a3a;
	}

	.field input {
		flex: 1;
		min-width: 0;
	}

	.selection {
		display: flex;
		align-items: center;
		gap: 4px;
		padding-left: 3px;
		color: #e0e0e0;
	}

	.app .selection span {
		font-size: 5px;
	}

	.app .dark {
		width: 5px;
		height: 8px;
		background: #292929;
	}

	.dot {
		width: 3px;
		height: 3px;
		background: #222;
	}

	.mute {
		margin-left: 6px;
	}

	.auto-on {
		margin-left: 3px;
	}

	.app .auto {
		width: 25px;
		height: 8px;
		background: #3c3c3c;
	}

	.knob {
		width: 7px;
		height: 7px;
		margin-left: 8px;
		border-radius: 50%;
		background: #eee;
	}

	.app .volume {
		width: 28px;
		height: 6px;
		margin-left: 2px;
		appearance: none;
		background: linear-gradient(#1b1b1b 3px, #5a5a5a 3px);
	}

	.volume::-webkit-slider-thumb {
		appearance: none;
		width: 6px;
		height: 5px;
		background: #aaa;
	}

	.level {
		width: 25px;
		height: 4px;
		background: linear-gradient(90deg, #4cb4d6 52%, #1f4450 52% 80%, #222 80%);
	}

	.snap {
		display: flex;
		align-items: center;
		gap: 4px;
		margin-left: auto;
		padding-right: 6px;
	}

	.picker.grid {
		width: 24px;
		height: 8px;
		background: #282828;
	}

	.chip {
		width: 4px;
		height: 4px;
		background: #ece03c;
	}

	.violet {
		color: #5367b8;
	}

	.count {
		margin-left: 12px;
		color: #fff;
	}

	.workspace {
		position: relative;
		display: flex;
		padding-left: 7px;
		border-right: 4px solid #3c3c3c;
		background: #262626;
	}

	.score {
		display: block;
		width: 434px;
		height: 287px;
		background: #fff;
	}

	.staff {
		stroke: #a5a5a5;
		stroke-width: 0.6;
	}

	.bracket {
		stroke: #222;
		stroke-width: 2;
	}

	.hook,
	.edge,
	.stem,
	.flag,
	.clef {
		fill: none;
		stroke: #222;
		stroke-width: 0.7;
	}

	.clef {
		stroke-width: 1.1;
	}

	.clef.heavy {
		stroke-width: 1.5;
	}

	.hook {
		stroke-width: 1;
	}

	.bar {
		stroke: #444;
		stroke-width: 1;
	}

	.bar.soft {
		stroke: #888;
		stroke-width: 0.7;
	}

	.beam {
		stroke: #222;
		stroke-width: 1.4;
	}

	.cursor {
		stroke: #9be797;
		stroke-width: 1.3;
	}

	.part {
		font-size: 9px;
		fill: #333;
	}

	.measure {
		font-size: 7px;
		fill: #333;
	}

	.marker {
		font-family: 'Liberation Serif', 'Times New Roman', serif;
		font-size: 7px;
		fill: #333;
	}

	.meter {
		font-family: 'Liberation Serif', 'Times New Roman', serif;
		font-size: 10px;
		font-weight: 700;
		text-anchor: middle;
	}

	.palette {
		position: absolute;
		border-radius: 4px;
		background: #454545;
		box-shadow: 0 2px 6px rgba(0, 0, 0, 0.4);
		overflow: hidden;
	}

	.palette h2 {
		margin: 0;
		background: #e9e9e9 radial-gradient(circle at 5px 5px, #c4c4c4 2px, transparent 3px);
		color: #999;
		font-size: 6px;
		font-weight: 400;
		line-height: 10px;
		text-align: center;
	}

	.shortcuts {
		top: 87px;
		left: 656px;
		width: 165px;
	}

	.primary {
		top: 169px;
		left: 731px;
		width: 63px;
	}

	.primary h2 {
		padding-right: 3px;
		text-align: right;
	}

	.cells {
		display: grid;
		grid-template-columns: repeat(10, 15px);
		grid-auto-rows: 15px;
		padding: 0 2px 5px;
		color: #ccc;
	}

	.primary .cells {
		grid-template-columns: repeat(4, 15px);
		padding: 1px;
	}

	.cells button {
		display: grid;
		place-items: center;
	}

	.app .cells .dim {
		color: #747474;
	}

	.app .cells .faint {
		color: #606060;
	}

	.app .cells .cyan,
	.app .cells .boxed {
		margin: 2px;
		background: #262626;
	}

	.app .cells .cyan {
		color: #2bb8e6;
	}

	.status {
		display: flex;
		align-items: center;
		gap: 3px;
		height: 8px;
		padding-left: 1px;
		background: #3e3e3e;
	}

	.status span {
		display: flex;
		align-items: center;
		gap: 4px;
	}

	.app .cool {
		gap: 2px;
		color: #37a8c9;
	}

	.page {
		margin: 0 6px 0 3px;
	}

	.status.tall {
		box-sizing: border-box;
		height: 11px;
		padding-bottom: 2px;
		background: #424242;
	}

	.show {
		margin-left: 3px;
	}

	.pointer {
		margin: 0 8px;
		color: #222;
	}

	.thumb {
		width: 33px;
		height: 3px;
		margin-left: 164px;
		border-radius: 2px;
		background: #292929;
	}

	.zoom {
		margin: 0 6px 0 auto;
		color: #222;
	}

	.roll {
		display: block;
		width: 100%;
		height: 286px;
		background: #454545;
	}
</style>
